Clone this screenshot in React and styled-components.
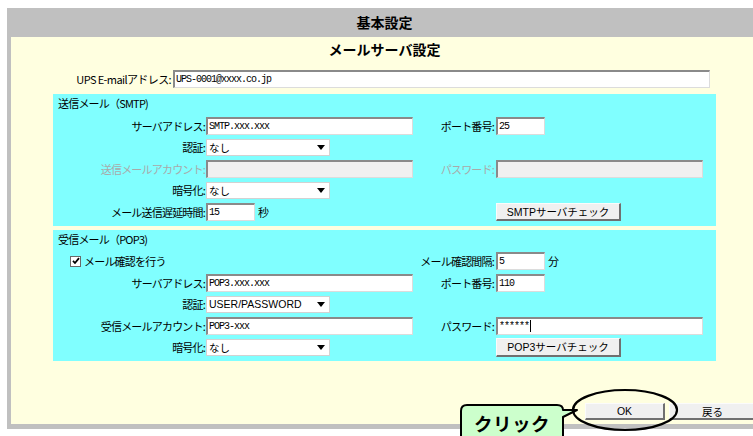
import React from 'react';
import styled, { createGlobalStyle } from 'styled-components';

const GlobalStyle = createGlobalStyle`
  html, body { margin: 0; padding: 0; background: #fff; overflow: hidden; }
  body { font-family: "Noto Sans CJK JP", "Liberation Sans", sans-serif; color: #000; }
  #root { position: relative; width: 753px; height: 436px; overflow: hidden; }
`;

const Frame = styled.div`
  box-sizing: border-box;
  margin: 8px 0 0 7px;
  width: 755px;
  background: #c0c0c0;
  padding: 0 4px 5px 4px;
`;

const Header = styled.div`
  height: 29px;
  line-height: 29px;
  text-align: center;
  font-size: 14px;
  font-weight: 700;
`;

const Panel = styled.div`
  height: 387px;
  background: #ffffe0;
  display: flex;
  flex-direction: column;
`;

const Subtitle = styled.div`
  height: 24px;
  line-height: 24px;
  text-align: center;
  font-size: 14px;
  font-weight: 700;
`;

const EmailRow = styled.div`
  display: flex;
  align-items: center;
  height: 18px;
  margin-top: 9px;
`;

const EmailLabel = styled.div`
  width: 160px;
  margin-right: 2px;
  text-align: right;
  font-size: 11px;
  letter-spacing: -0.6px;
  white-space: nowrap;
`;

const Section = styled.div`
  margin: ${p => (p.$first ? '6px' : '4px')} 42px 0;
  background: #80ffff;
  padding-bottom: 5px;
`;

const SectionTitle = styled.div`
  height: 19px;
  line-height: 19px;
  padding-left: 5px;
  font-size: 11px;
  letter-spacing: -0.8px;
`;

const Grid = styled.div`
  margin-top: 3.5px;
  display: grid;
  grid-template-columns: 153px 214px 76px 1fr;
  grid-auto-rows: 18px;
  row-gap: 3.5px;
`;

const Label = styled.div`
  grid-column: ${p => p.$col};
  display: flex;
  align-items: center;
  justify-content: flex-end;
  padding-right: ${p => (p.$col === 3 ? 2 : 1)}px;
  font-size: 11px;
  letter-spacing: -0.8px;
  white-space: nowrap;
  color: ${p => (p.$disabled ? '#a9a9a9' : '#000')};
`;

const Cell = styled.div`
  grid-column: ${p => p.$col};
  display: flex;
  align-items: center;
  gap: 3px;
`;

const TextBox = styled.div`
  box-sizing: border-box;
  width: ${p => p.$w}px;
  height: 18px;
  display: flex;
  align-items: center;
  padding: 0 1px;
  border-style: solid;
  border-width: 2px 1px 1px 2px;
  border-color: #8a8a8a #dcdcdc #dcdcdc #8a8a8a;
  background: ${p => (p.$disabled ? '#f0f0f0' : '#fff')};
  font-family: "Liberation Mono", monospace;
  font-size: 10px;
  letter-spacing: -1px;
  white-space: nowrap;
  overflow: hidden;
`;

const Caret = styled.span`
  display: inline-block;
  width: 1px;
  height: 12px;
  margin-left: 1px;
  background: #000;
`;

const Unit = styled.span`
  font-size: 11px;
`;

const SelectBox = styled.div`
  box-sizing: border-box;
  width: 124px;
  height: 17px;
  background: #fff;
  border: 1px solid #d2d2d2;
  display: flex;
  align-items: center;
  justify-content: space-between;
  padding: 0 4px 0 2px;
  font-family: "Liberation Sans", "Noto Sans CJK JP", sans-serif;
  font-size: 10.5px;
  white-space: nowrap;
`;

const Button = styled.button`
  box-sizing: border-box;
  width: ${p => p.$w}px;
  height: ${p => p.$h}px;
  margin: 0;
  padding: 0;
  background: #f0f0f0;
  border-style: solid;
  border-width: 1px 2px 2px 1px;
  border-color: #fbfbfb #707070 #707070 #fbfbfb;
  font-family: "Liberation Sans", "Noto Sans CJK JP", sans-serif;
  font-size: 10.5px;
  color: #000;
  display: flex;
  align-items: center;
  justify-content: center;
`;

const CheckRow = styled.div`
  grid-column: 1 / 3;
  display: flex;
  align-items: center;
  gap: 3px;
  padding-left: 17px;
  font-size: 11px;
  letter-spacing: -0.8px;
`;

const CheckBox = styled.span`
  box-sizing: border-box;
  width: 11px;
  height: 11px;
  background: #fff;
  border: 1px solid #6a6a6a;
  display: flex;
  align-items: center;
  justify-content: center;
`;

const ButtonBar = styled.div`
  margin-top: auto;
  padding: 0 1px 4px 0;
  display: flex;
  justify-content: flex-end;
  gap: 4px;
`;

const Callout = styled.div`
  position: absolute;
  left: 455px;
  top: 385px;
  width: 240px;
  height: 51px;
  pointer-events: none;
`;

const CalloutShape = styled.svg`
  position: absolute;
  left: 0;
  top: 0;
`;

const CalloutText = styled.span`
  position: absolute;
  left: 6px;
  top: 28px;
  width: 102px;
  height: 20px;
  line-height: 20px;
  text-align: center;
  font-size: 18.5px;
  font-weight: 700;
  letter-spacing: 0.5px;
`;

const Arrow = () => (
  <svg width="8" height="5" viewBox="0 0 8 5">
    <path d="M0 0 H8 L4 5 Z" fill="#000" />
  </svg>
);

const Select = ({ children }) => (
  <SelectBox>
    <span>{children}</span>
    <Arrow />
  </SelectBox>
);

export default function App() {
  return (
    <>
      <GlobalStyle />
      <Frame>
        <Header>基本設定</Header>
        <Panel>
          <Subtitle>メールサーバ設定</Subtitle>
          <EmailRow>
            <EmailLabel>UPS E-mailアドレス:</EmailLabel>
            <TextBox $w={537}>UPS-0001@xxxx.co.jp</TextBox>
          </EmailRow>

          <Section $first>
            <SectionTitle>送信メール（SMTP)</SectionTitle>
            <Grid>
              <Label $col={1}>サーバアドレス:</Label>
              <Cell $col={2}><TextBox $w={207}>SMTP.xxx.xxx</TextBox></Cell>
              <Label $col={3}>ポート番号:</Label>
              <Cell $col={4}><TextBox $w={49}>25</TextBox></Cell>

              <Label $col={1}>認証:</Label>
              <Cell $col={2}><Select>なし</Select></Cell>

              <Label $col={1} $disabled>送信メールアカウント:</Label>
              <Cell $col={2}><TextBox $w={207} $disabled /></Cell>
              <Label $col={3} $disabled>パスワード:</Label>
              <Cell $col={4}><TextBox $w={207} $disabled /></Cell>

              <Label $col={1}>暗号化:</Label>
              <Cell $col={2}><Select>なし</Select></Cell>

              <Label $col={1}>メール送信遅延時間:</Label>
              <Cell $col={2}><TextBox $w={49}>15</TextBox><Unit>秒</Unit></Cell>
              <Cell $col={4}><Button $w={125} $h={18}>SMTPサーバチェック</Button></Cell>
            </Grid>
          </Section>

          <Section>
            <SectionTitle>受信メール（POP3)</SectionTitle>
            <Grid>
              <CheckRow>
                <CheckBox>
                  <svg width="8" height="8" viewBox="0 0 8 8">
                    <path d="M1 3.8 L3 6 L7 1.2" fill="none" stroke="#000" strokeWidth="1.8" />
                  </svg>
                </CheckBox>
                メール確認を行う
              </CheckRow>
              <Label $col={3}>メール確認間隔:</Label>
              <Cell $col={4}><TextBox $w={49}>5</TextBox><Unit>分</Unit></Cell>

              <Label $col={1}>サーバアドレス:</Label>
              <Cell $col={2}><TextBox $w={207}>POP3.xxx.xxx</TextBox></Cell>
              <Label $col={3}>ポート番号:</Label>
              <Cell $col={4}><TextBox $w={49}>110</TextBox></Cell>

              <Label $col={1}>認証:</Label>
              <Cell $col={2}><Select>USER/PASSWORD</Select></Cell>

              <Label $col={1}>受信メールアカウント:</Label>
              <Cell $col={2}><TextBox $w={207}>POP3-xxx</TextBox></Cell>
              <Label $col={3}>パスワード:</Label>
              <Cell $col={4}><TextBox $w={207}>******<Caret /></TextBox></Cell>

              <Label $col={1}>暗号化:</Label>
              <Cell $col={2}><Select>なし</Select></Cell>
              <Cell $col={4}><Button $w={125} $h={19}>POP3サーバチェック</Button></Cell>
            </Grid>
          </Section>

          <ButtonBar>
            <Button $w={80} $h={17}>OK</Button>
            <Button $w={88} $h={17}>戻る</Button>
          </ButtonBar>
        </Panel>
      </Frame>

      <Callout>
        <CalloutShape width="240" height="51" viewBox="455 385 240 51">
          <path
            d="M467 405 H557 Q563 405 563 410 L577 410 L563 417 V450 H461 V411 Q461 405 467 405 Z"
            fill="#ccffcc"
            stroke="#000"
            strokeWidth="2"
            strokeLinejoin="round"
          />
          <ellipse cx="625" cy="410" rx="52" ry="20" fill="none" stroke="#000" strokeWidth="2.2" />
        </CalloutShape>
        <CalloutText>クリック</CalloutText>
      </Callout>
    </>
  );
}
